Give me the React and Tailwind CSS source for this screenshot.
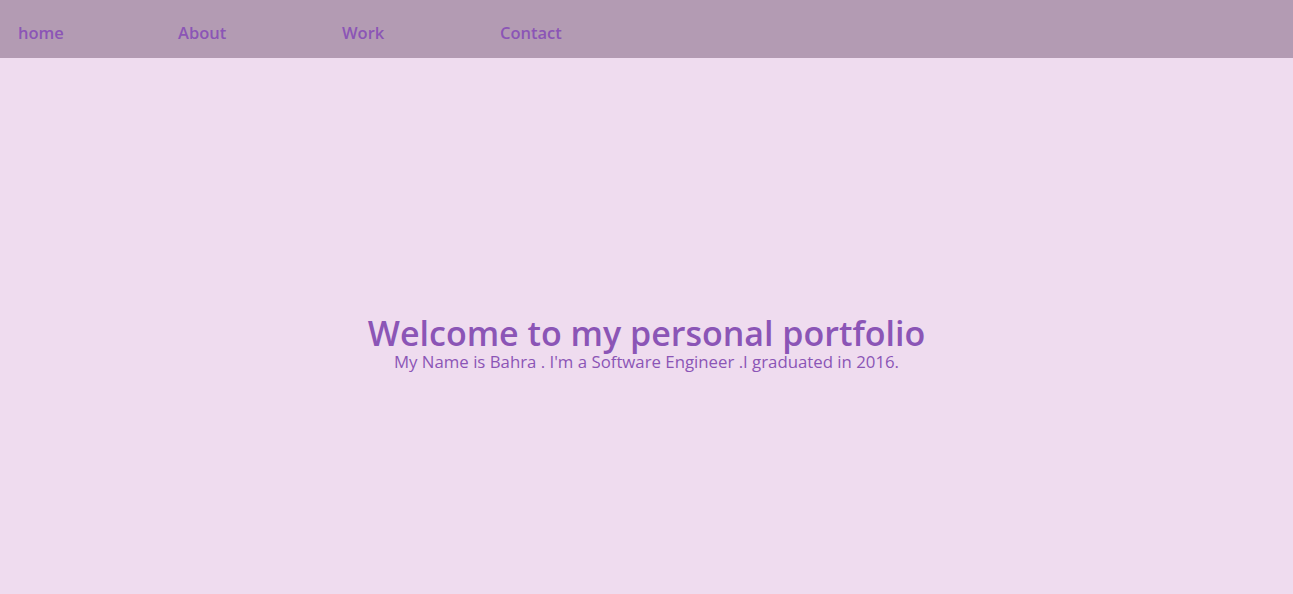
import React from 'react';

const links = [
  { label: 'home', w: 'w-[160px]' },
  { label: 'About', w: 'w-[164px]' },
  { label: 'Work', w: 'w-[158px]' },
  { label: 'Contact', w: 'w-[120px]' },
];

export default function App() {
  return (
    <div className="min-h-[594px] bg-[#efdcef] text-[#8b55b6] font-['Open_Sans',sans-serif]">
      {/* Nav */}
      <nav className="h-[58px] bg-[#b39bb3] flex items-center pl-[18px] pt-[8px]">
        {links.map((l) => (
          <a key={l.label} href="#" className={`${l.w} text-[16.5px] font-semibold`}>
            {l.label}
          </a>
        ))}
      </nav>

      {/* Hero */}
      <section className="flex flex-col items-center pt-[256px]">
        <h1 className="text-[34px] font-semibold leading-[38px]">Welcome to my personal portfolio</h1>
        <p className="text-[16.8px] leading-[20px]">My Name is Bahra . I'm a Software Engineer .I graduated in 2016.</p>
      </section>
    </div>
  );
}
